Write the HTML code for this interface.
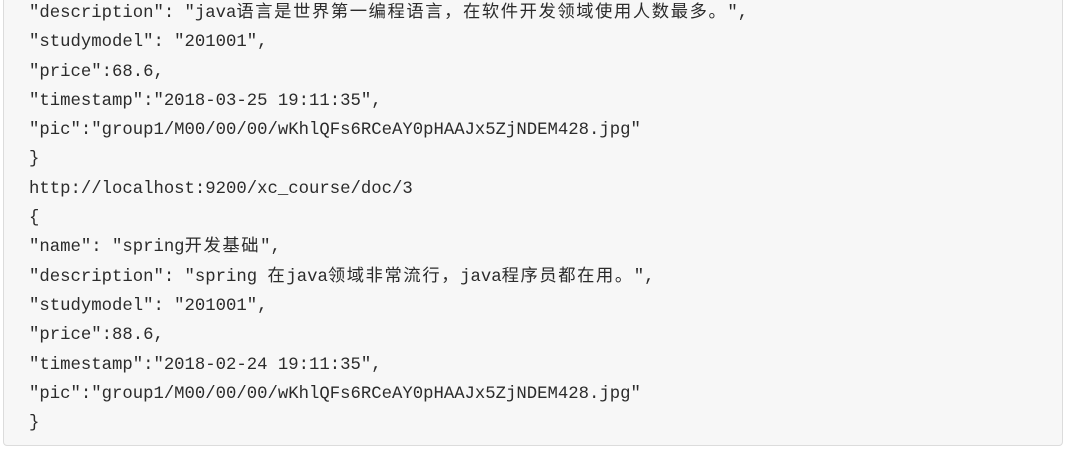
<!DOCTYPE html>
<html><head><meta charset="utf-8"><style>
html,body{margin:0;padding:0;background:#fff;width:1067px;height:451px;overflow:hidden}
.box{position:absolute;left:3px;top:-10px;width:1060px;height:456px;background:#f7f7f7;border:1px solid #dcdcdc;border-radius:4px;box-sizing:border-box}
.code{position:absolute;left:29px;top:-1px;margin:0;font-family:"Liberation Mono","Noto Sans CJK SC",monospace;font-size:17.3px;color:#2b2b2b}
.code div{height:29.3px;line-height:29.3px;white-space:pre}
.c{font-family:"Noto Sans CJK SC",sans-serif;font-size:17.3px;letter-spacing:1.6px;line-height:1}
</style></head><body>
<div class="box"></div>
<div class="code"><div>"description": "java<span class="c">语言是世界第一编程语言，在软件开发领域使用人数最多。</span>",</div><div>"studymodel": "201001",</div><div>"price":68.6,</div><div>"timestamp":"2018-03-25 19:11:35",</div><div>"pic":"group1/M00/00/00/wKhlQFs6RCeAY0pHAAJx5ZjNDEM428.jpg"</div><div>}</div><div>http://localhost:9200/xc_course/doc/3</div><div>{</div><div>"name": "spring<span class="c">开发基础</span>",</div><div>"description": "spring <span class="c">在</span>java<span class="c">领域非常流行，</span>java<span class="c">程序员都在用。</span>",</div><div>"studymodel": "201001",</div><div>"price":88.6,</div><div>"timestamp":"2018-02-24 19:11:35",</div><div>"pic":"group1/M00/00/00/wKhlQFs6RCeAY0pHAAJx5ZjNDEM428.jpg"</div><div>}</div></div>
</body></html>
